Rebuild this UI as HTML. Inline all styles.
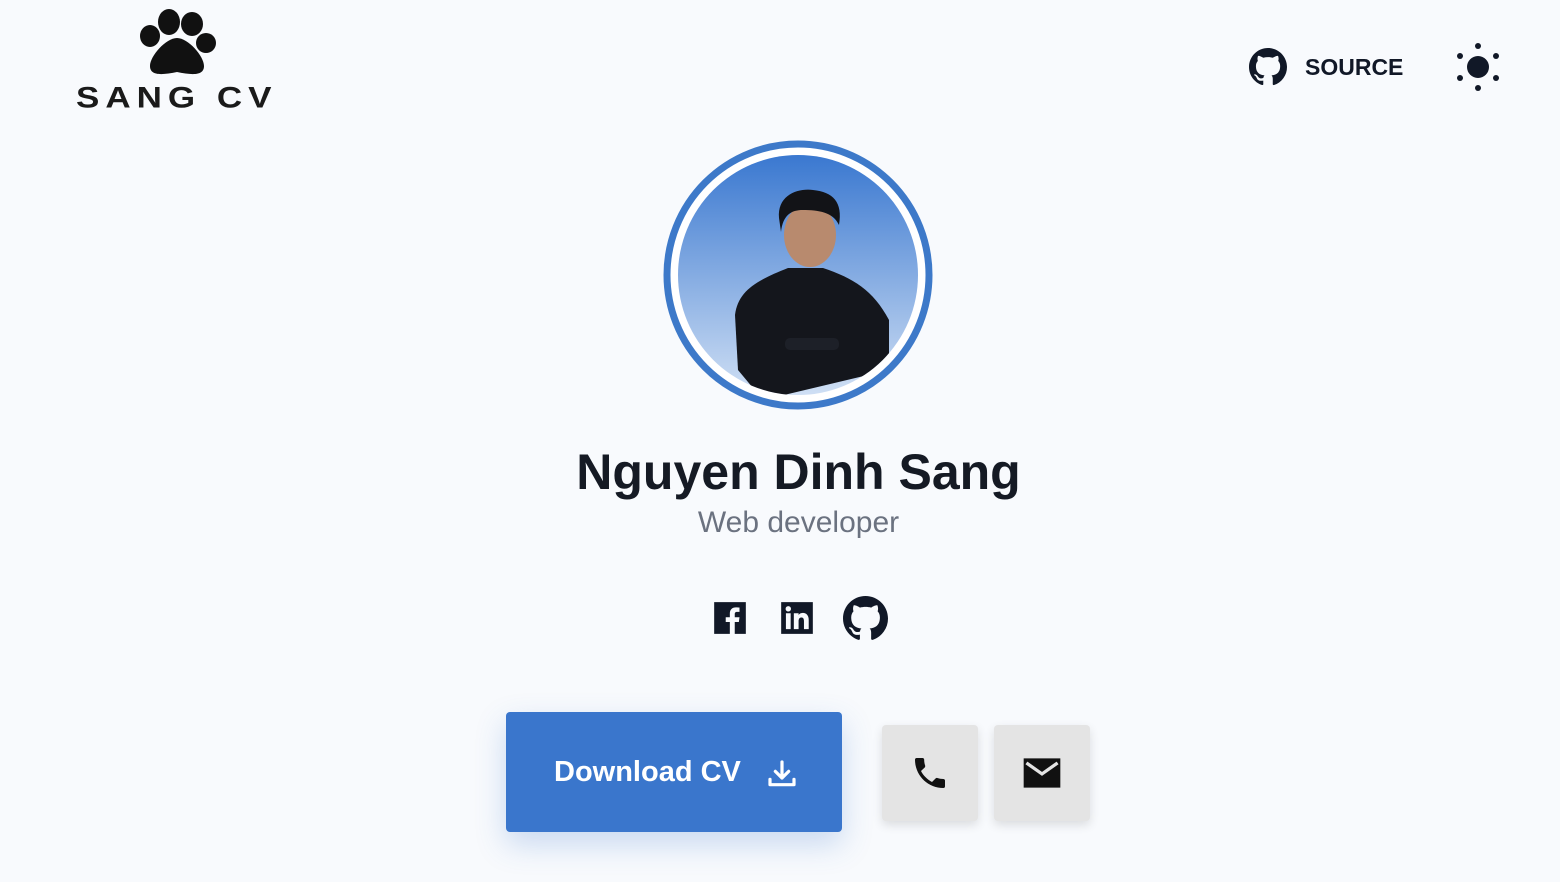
<!DOCTYPE html>
<html><head><style>
body{margin:0;width:1560px;height:882px;background:#f8fafd;font-family:"Liberation Sans",sans-serif;position:relative;overflow:hidden;color:#111827}
.abs{position:absolute}
</style></head><body>
<svg class="abs" style="left:130px;top:0px" width="100" height="80" viewBox="0 0 100 80">
<ellipse cx="20" cy="36" rx="10" ry="11" fill="#111"/>
<ellipse cx="39" cy="22" rx="11" ry="13" fill="#111"/>
<ellipse cx="62" cy="24" rx="11" ry="12" fill="#111"/>
<ellipse cx="76" cy="43" rx="10" ry="10" fill="#111"/>
<path d="M47 38C36 38 20 56 20 66 20 76 32 75 47 72 62 75 74 76 74 66 74 56 58 38 47 38Z" fill="#111"/>
</svg>
<div class="abs" style="left:76px;top:81px;font-size:35px;letter-spacing:6px;font-weight:bold;color:#1a1a1a;transform:scaleY(0.85);transform-origin:top left">SANG CV</div>
<svg class="abs" style="left:1249px;top:48px" width="38" height="38" viewBox="0 0 16 16"><path fill="#111827" d="M8 0C3.58 0 0 3.58 0 8c0 3.54 2.29 6.53 5.47 7.59.4.07.55-.17.55-.38 0-.19-.01-.82-.01-1.49-2.01.37-2.53-.49-2.69-.94-.09-.23-.48-.94-.82-1.13-.28-.15-.68-.52-.01-.53.63-.01 1.08.58 1.23.82.72 1.21 1.87.87 2.33.66.07-.52.28-.87.51-1.07-1.78-.2-3.64-.89-3.64-3.95 0-.87.31-1.59.82-2.15-.08-.2-.36-1.02.08-2.12 0 0 .67-.21 2.2.82.64-.18 1.32-.27 2-.27.68 0 1.36.09 2 .27 1.53-1.04 2.2-.82 2.2-.82.44 1.1.16 1.92.08 2.12.51.56.82 1.27.82 2.15 0 3.07-1.87 3.75-3.65 3.95.29.25.54.73.54 1.48 0 1.07-.01 1.93-.01 2.2 0 .21.15.46.55.38A8.013 8.013 0 0016 8c0-4.42-3.58-8-8-8z"/></svg>
<div class="abs" style="left:1305px;top:54px;font-size:23px;font-weight:bold">SOURCE</div>
<svg class="abs" style="left:1454px;top:43px" width="48" height="48" viewBox="0 0 48 48" fill="#111827">
<circle cx="24" cy="24" r="11"/><circle cx="24" cy="3" r="3"/><circle cx="24" cy="45" r="3"/>
<circle cx="6" cy="13" r="3"/><circle cx="42" cy="13" r="3"/><circle cx="6" cy="35" r="3"/><circle cx="42" cy="35" r="3"/></svg>

<svg class="abs" style="left:663px;top:140px" width="270" height="270" viewBox="0 0 270 270">
<defs><linearGradient id="g" x1="0" y1="0" x2="0" y2="1"><stop offset="0" stop-color="#3a78d0"/><stop offset="1" stop-color="#cfdff4"/></linearGradient>
<clipPath id="c"><circle cx="135" cy="135" r="120"/></clipPath></defs>
<circle cx="135" cy="135" r="131" fill="#fff" stroke="#3d79c9" stroke-width="7"/>
<circle cx="135" cy="135" r="120" fill="url(#g)"/>
<g clip-path="url(#c)">
<path d="M72 175C75 150 95 140 125 128L160 128C190 138 210 150 226 180L226 230 100 260 75 230Z" fill="#14161c"/>
<ellipse cx="147" cy="95" rx="26" ry="32" fill="#b88a6e"/>
<path d="M116 78C114 55 135 48 150 50 170 52 180 62 176 85 170 72 155 70 140 70 128 70 120 75 118 92Z" fill="#121317"/>
<rect x="122" y="198" width="54" height="12" rx="5" fill="#1d2028"/>
</g></svg>

<div class="abs" style="left:0;width:1597px;top:443px;text-align:center;font-size:50px;font-weight:bold;color:#151a24">Nguyen Dinh Sang</div>
<div class="abs" style="left:0;width:1597px;top:506px;text-align:center;font-size:30px;color:#6b7280">Web developer</div>

<svg class="abs" style="left:711px;top:599px" width="38" height="38" viewBox="0 0 24 24"><path fill="#111827" d="M2 2h20v20h-7v-7.5h2.6l.4-3h-3V9.6c0-.9.3-1.5 1.6-1.5H18V5.4c-.3 0-1.2-.1-2.3-.1-2.3 0-3.8 1.4-3.8 3.9v2.3H9.3v3h2.6V22H2z"/></svg>
<svg class="abs" style="left:778px;top:599px" width="38" height="38" viewBox="0 0 24 24"><path fill="#111827" d="M2 2h20v20H2z M5 9v10h3V9z M6.5 4.5a1.7 1.7 0 100 3.4 1.7 1.7 0 000-3.4z M10 9v10h3v-5c0-1.5.7-2.3 1.8-2.3s1.6.8 1.6 2.3v5h3v-5.8c0-2.8-1.5-4.4-3.7-4.4-1.4 0-2.3.7-2.7 1.3V9z" fill-rule="evenodd"/></svg>
<svg class="abs" style="left:843px;top:596px" width="45" height="45" viewBox="0 0 16 16"><path fill="#111827" d="M8 0C3.58 0 0 3.58 0 8c0 3.54 2.29 6.53 5.47 7.59.4.07.55-.17.55-.38 0-.19-.01-.82-.01-1.49-2.01.37-2.53-.49-2.69-.94-.09-.23-.48-.94-.82-1.13-.28-.15-.68-.52-.01-.53.63-.01 1.08.58 1.23.82.72 1.21 1.87.87 2.33.66.07-.52.28-.87.51-1.07-1.78-.2-3.64-.89-3.64-3.95 0-.87.31-1.59.82-2.15-.08-.2-.36-1.02.08-2.12 0 0 .67-.21 2.2.82.64-.18 1.32-.27 2-.27.68 0 1.36.09 2 .27 1.53-1.04 2.2-.82 2.2-.82.44 1.1.16 1.92.08 2.12.51.56.82 1.27.82 2.15 0 3.07-1.87 3.75-3.65 3.95.29.25.54.73.54 1.48 0 1.07-.01 1.93-.01 2.2 0 .21.15.46.55.38A8.013 8.013 0 0016 8c0-4.42-3.58-8-8-8z"/></svg>

<div class="abs" style="left:506px;top:712px;width:336px;height:120px;background:#3a76cc;border-radius:4px;box-shadow:0 12px 30px rgba(58,118,204,.25)"></div>
<div class="abs" style="left:554px;top:756px;font-size:29px;font-weight:bold;color:#fff">Download CV</div>
<svg class="abs" style="left:766px;top:758px" width="32" height="32" viewBox="0 0 24 24" fill="none" stroke="#fff" stroke-width="2.4" stroke-linecap="round" stroke-linejoin="round"><path d="M12 3v12M7 10l5 5 5-5M3 16v4h18v-4"/></svg>

<div class="abs" style="left:882px;top:725px;width:96px;height:96px;background:#e4e4e4;border-radius:4px;box-shadow:0 4px 10px rgba(0,0,0,.12)"></div>
<svg class="abs" style="left:910px;top:753px" width="40" height="40" viewBox="0 0 24 24"><path fill="#111" d="M6.6 10.8c1.4 2.8 3.8 5.1 6.6 6.6l2.2-2.2c.3-.3.7-.4 1-.2 1.1.4 2.3.6 3.6.6.6 0 1 .4 1 1V20c0 .6-.4 1-1 1C10.6 21 3 13.4 3 4c0-.6.4-1 1-1h3.5c.6 0 1 .4 1 1 0 1.3.2 2.5.6 3.6.1.3 0 .7-.2 1z"/></svg>
<div class="abs" style="left:994px;top:725px;width:96px;height:96px;background:#e4e4e4;border-radius:4px;box-shadow:0 4px 10px rgba(0,0,0,.12)"></div>
<svg class="abs" style="left:1020px;top:751px" width="44" height="44" viewBox="0 0 24 24"><path fill="#111" d="M2 4h20v16H2z"/><path fill="none" stroke="#e4e4e4" stroke-width="1.8" d="M3.5 6.5l8.5 6 8.5-6"/></svg>
</body></html>
